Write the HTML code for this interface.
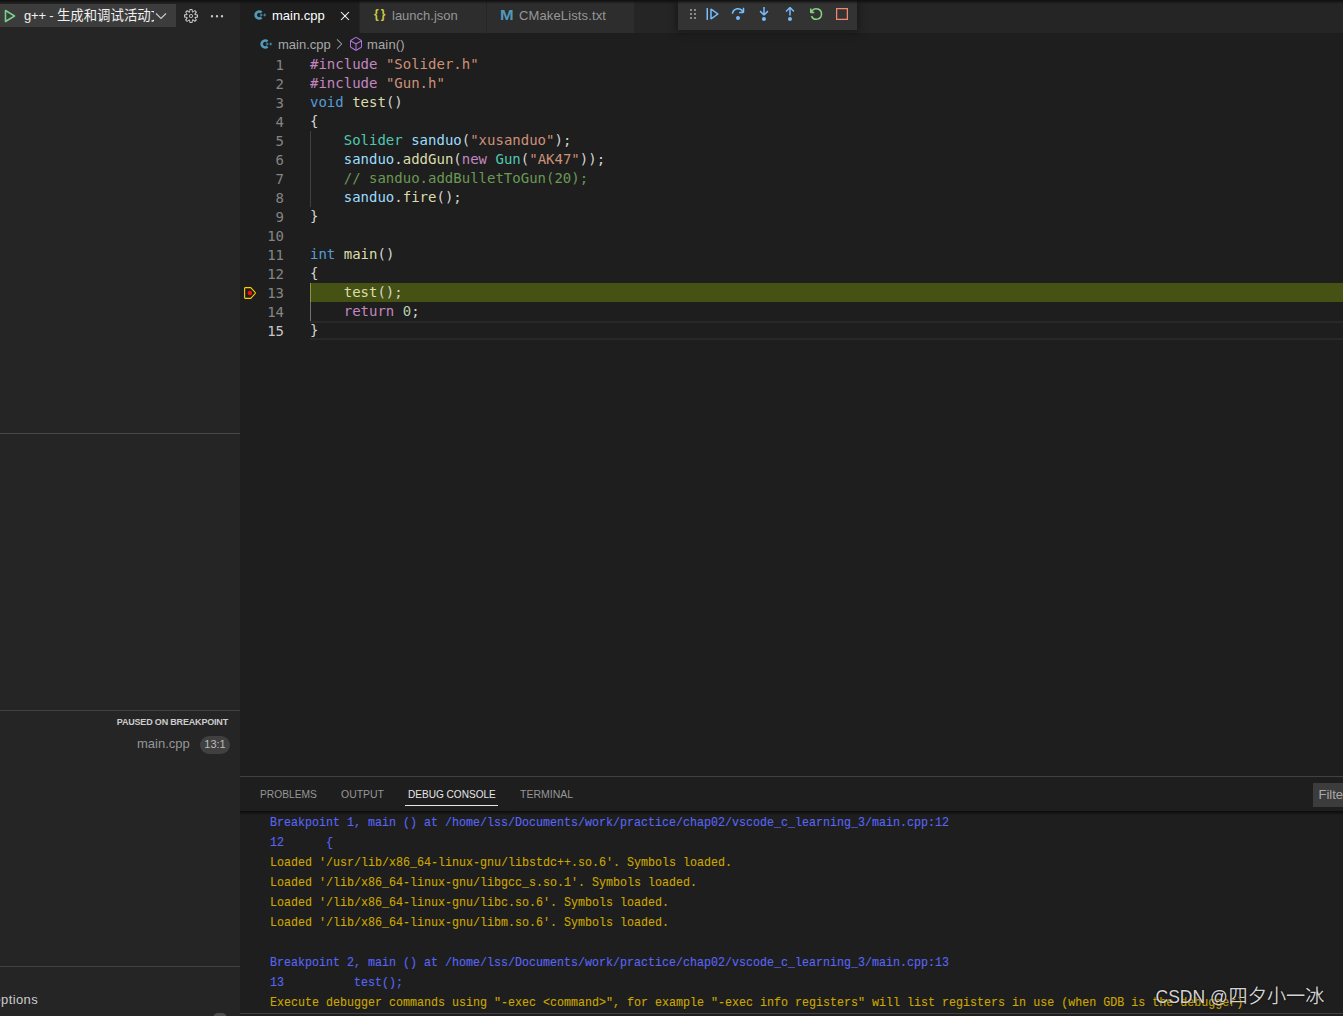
<!DOCTYPE html>
<html lang="zh">
<head>
<meta charset="utf-8">
<title>main.cpp - debug</title>
<style>
*{box-sizing:border-box;margin:0;padding:0}
html,body{width:1343px;height:1016px;overflow:hidden;background:#1e1e1e}
body{position:relative;font-family:"Liberation Sans","Noto Sans CJK SC",sans-serif;font-size:13px;color:#ccc}
.abs{position:absolute}
#side{left:0;top:0;width:240px;height:1016px;background:#252526}
#tabs{left:240px;top:0;width:1103px;height:33px;background:#252526}
.tab{position:absolute;top:0;height:33px;background:#2d2d2d;border-right:1px solid #252526;color:#969696;font-size:13px;line-height:31px;white-space:nowrap}
.tab.act{background:#1e1e1e;color:#fff}
.hl{border-top:1px solid #3c3c3c}
#code{left:240px;top:55px;width:1103px;font-family:"DejaVu Sans Mono","Liberation Mono",monospace;font-size:14px;line-height:19px;color:#d4d4d4;white-space:pre}
.ln{position:absolute;left:0;width:44px;text-align:right;color:#858585;margin-top:1px}
.cl{position:absolute;left:70px}
.k{color:#569cd6}.c{color:#c586c0}.s{color:#ce9178}.f{color:#dcdcaa}.t{color:#4ec9b0}.v{color:#9cdcfe}.g{color:#6a9955}.n{color:#b5cea8}
#panel{left:240px;top:776px;width:1103px;height:240px;border-top:1px solid #414141;background:#1e1e1e}
.pt{position:absolute;top:10px;font-size:11px;line-height:14px;color:#969696;white-space:nowrap;transform:scaleX(.93);transform-origin:0 0}
#con{left:270px;top:813px;width:1400px;font-family:"Liberation Mono",monospace;font-size:13.500px;line-height:20px;transform:scaleX(.8642);transform-origin:0 0;-webkit-text-stroke:.12px currentColor}
#con div{height:20px;white-space:pre;tab-size:8}
.b{color:#5966f6}.y{color:#cca700}
</style>
</head>
<body>
<div id="side" class="abs">
  <div class="abs" style="left:0;top:4px;width:176px;height:23px;background:#3c3c3c"></div>
  <svg class="abs" style="left:4px;top:9px" width="12" height="14" viewBox="0 0 12 14"><path d="M1.5 1.5 L10.5 7 L1.5 12.5 Z" fill="none" stroke="#78d186" stroke-width="1.600" stroke-linejoin="round"/></svg>
  <div class="abs" style="left:24px;top:6px;font-size:13px;line-height:19px;color:#f0f0f0;white-space:nowrap;width:129.500px;overflow:hidden"><span style="letter-spacing:-.17px">g++ - </span><span style="font-size:13.400px">生成和调试活动文件</span></div>
  <svg class="abs" style="left:155px;top:11px" width="12" height="10" viewBox="0 0 12 10"><path d="M1 2.5 L6 7.5 L11 2.5" fill="none" stroke="#ccc" stroke-width="1.1"/></svg>
  <svg class="abs" style="left:183px;top:8px" width="16" height="16" viewBox="0 0 16 16"><path fill="#c5c5c5" fill-rule="evenodd" d="M9.1 4.4L8.6 2H7.400l-.5 2.400-.7.300-2-1.300-.9.800 1.300 2-.2.700-2.400.500v1.200l2.400.500.3.800-1.300 2 .8.800 2-1.300.8.300.4 2.300h1.200l.5-2.400.8-.3 2 1.300.8-.8-1.300-2 .3-.8 2.300-.4V7.400l-2.400-.5-.3-.8 1.300-2-.8-.8-2 1.300-.7-.2zM9.400 1l.5 2.400L12 2.100l2 2-1.400 2.100 2.400.4v2.800l-2.400.5L14 12l-2 2-2.100-1.400-.5 2.400H6.600l-.5-2.400L4 13.900l-2-2 1.400-2.100L1 9.400V6.600l2.400-.5L2.100 4l2-2 2.100 1.400.4-2.400h2.800zm.6 7c0 1.100-.9 2-2 2s-2-.9-2-2 .9-2 2-2 2 .9 2 2zM8 9c.6 0 1-.4 1-1s-.4-1-1-1-1 .4-1 1 .4 1 1 1z"/></svg>
  <svg class="abs" style="left:209px;top:8px" width="16" height="16" viewBox="0 0 16 16"><path fill="#c5c5c5" d="M4.200 8.300a1.200 1.200 0 1 1-2.400 0 1.200 1.200 0 0 1 2.400 0zm5 0a1.200 1.200 0 1 1-2.400 0 1.200 1.200 0 0 1 2.400 0zm5 0a1.200 1.200 0 1 1-2.400 0 1.200 1.200 0 0 1 2.400 0z"/></svg>
  <div class="abs" style="left:0;top:433px;width:240px;height:1px;background:#474747"></div>
  <div class="abs" style="left:0;top:710px;width:240px;height:1px;background:#414141"></div>
  <div class="abs" style="left:0;top:966px;width:240px;height:1px;background:#414141"></div>
  <div class="abs" style="right:12px;top:716px;font-size:9px;font-weight:bold;color:#ccc;line-height:13px;white-space:nowrap;letter-spacing:-.18px">PAUSED ON BREAKPOINT</div>
  <div class="abs" style="left:137px;top:735px;font-size:13px;line-height:18px;color:#969696">main.cpp</div>
  <div class="abs" style="left:200px;top:736px;width:30px;height:18px;border-radius:9px;background:#404040;color:#bcbcbc;font-size:11px;line-height:17px;text-align:center">13:1</div>
  <div class="abs" style="left:-6.500px;top:991px;font-size:13px;line-height:18px;color:#ccc;letter-spacing:.38px;white-space:nowrap">eptions</div>
  <div class="abs" style="left:213px;top:1013px;width:14px;height:10px;border-radius:5px;background:#4d4d4d"></div>
</div>

<div id="tabs" class="abs">
  <div class="tab act" style="left:0;width:120px"><svg class="abs" style="left:14px;top:9px" width="13" height="12" viewBox="0 0 13 12"><path d="M7.5 3.4A3.500 3.500 0 1 0 7.500 8.600" fill="none" stroke="#519aba" stroke-width="2.700"/><path d="M5.800 6h2.800M7.200 4.600v2.800M9.300 6h2.800M10.700 4.600v2.800" stroke="#519aba" stroke-width="1" fill="none" opacity=".85"/></svg><span class="abs" style="left:32px">main.cpp</span>
    <svg class="abs" style="left:97px;top:8px" width="16" height="16" viewBox="0 0 16 16"><path fill="#fff" d="M8 8.707l3.646 3.647.708-.707L8.707 8l3.647-3.646-.707-.708L8 7.293 4.354 3.646l-.707.708L7.293 8l-3.646 3.646.707.708L8 8.707z"/></svg></div>
  <div class="tab" style="left:120px;width:127px"><span class="abs" style="left:14px;top:-1px;color:#cbcb41;font-weight:bold;font-size:12px;letter-spacing:2px">{}</span><span class="abs" style="left:32px">launch.json</span></div>
  <div class="tab" style="left:247px;width:148px"><span class="abs" style="left:13px;top:0;color:#519aba;font-weight:bold;font-size:14px;transform:scaleX(1.17);transform-origin:0 0">M</span><span class="abs" style="left:32px;letter-spacing:.13px">CMakeLists.txt</span></div>
</div>
<div class="abs" style="left:678px;top:0;width:179px;height:30px;background:#333333;box-shadow:0 0 8px 2px rgba(0,0,0,.36)">
  <svg class="abs" style="left:7px;top:6px" width="16" height="16" viewBox="0 0 16 16"><path fill="#8a8a8a" d="M5 3h2v2H5zm0 4h2v2H5zm0 4h2v2H5zm4-8h2v2H9zm0 4h2v2H9zm0 4h2v2H9z"/></svg>
  <svg class="abs" style="left:26px;top:6px" width="16" height="16" viewBox="0 0 16 16"><path fill="#75beff" d="M2.5 2H4v12H2.500V2zm4.936.39L6.250 3v10l1.186.61 7-5V7.390l-7-5zM12.710 8l-4.960 3.543V4.457L12.710 8z"/></svg>
  <svg class="abs" style="left:52px;top:6px" width="16" height="16" viewBox="0 0 16 16"><path fill="#75beff" d="M14.250 5.750v-4h-1.500v2.542c-1.145-1.359-2.911-2.209-4.840-2.209-3.177 0-5.920 2.307-6.160 5.398l-.020.269h1.501l.022-.226c.212-2.195 2.202-3.940 4.656-3.940 1.736 0 3.244.875 4.050 2.166h-2.830v1.500h4.163l.962-.975V5.750h-.004zM8 14a2 2 0 1 0 0-4 2 2 0 0 0 0 4z"/></svg>
  <svg class="abs" style="left:78px;top:6px" width="16" height="16" viewBox="0 0 16 16"><path fill="#75beff" d="M8 9.532h.542l3.905-3.905-1.061-1.060-2.637 2.610V1H7.251v6.177l-2.637-2.610-1.061 1.060 3.905 3.905H8zm1.956 3.481a2 2 0 1 1-4 0 2 2 0 0 1 4 0z"/></svg>
  <svg class="abs" style="left:104px;top:6px" width="16" height="16" viewBox="0 0 16 16"><path fill="#75beff" d="M8 1h-.542L3.553 4.905l1.061 1.060 2.637-2.610v6.177h1.498V3.355l2.637 2.610 1.061-1.060L8.542 1H8zm1.956 12.013a2 2 0 1 1-4 0 2 2 0 0 1 4 0z"/></svg>
  <svg class="abs" style="left:130px;top:6px" width="16" height="16" viewBox="0 0 16 16"><path fill="#89d185" d="M12.750 8a4.500 4.500 0 0 1-8.610 1.834l-1.391.565A6.001 6.001 0 0 0 14.250 8 6 6 0 0 0 3.500 4.334V2.500H2v4l.750.750h3.500v-1.500H4.352A4.500 4.500 0 0 1 12.750 8z"/></svg>
  <svg class="abs" style="left:156px;top:6px" width="16" height="16" viewBox="0 0 16 16"><path fill="#f48771" d="M2 2v12h12V2H2zm10.750 10.750h-9.500v-9.500h9.500v9.500z"/></svg>
</div>
<div class="abs" style="left:0;top:0;width:1343px;height:4px;background:linear-gradient(#0e0e0e,rgba(14,14,14,0))"></div>

<svg class="abs" style="left:260px;top:38px" width="13" height="12" viewBox="0 0 13 12"><path d="M7.5 3.4A3.500 3.500 0 1 0 7.500 8.600" fill="none" stroke="#519aba" stroke-width="2.700"/><path d="M5.800 6h2.800M7.200 4.600v2.800M9.300 6h2.800M10.700 4.600v2.800" stroke="#519aba" stroke-width="1" fill="none" opacity=".85"/></svg>
<div class="abs" style="left:278px;top:36px;font-size:13px;line-height:18px;color:#a9a9a9;white-space:nowrap">main.cpp</div>
<svg class="abs" style="left:331px;top:36px" width="16" height="16" viewBox="0 0 16 16"><path fill="#a9a9a9" d="M10.072 8.024L5.715 3.667l.618-.62L11 7.716v.618L6.333 13l-.618-.619 4.357-4.357z"/></svg>
<svg class="abs" style="left:347.500px;top:36px" width="16" height="16" viewBox="0 0 16 16"><path fill="#b274e0" d="M13.510 4l-5-3h-1l-5 3-.490.860v6l.490.850 5 3h1l5-3 .490-.850v-6L13.510 4zm-6 9.560l-4.500-2.700V5.700l4.500 2.450v5.410zM3.270 4.700l4.740-2.840 4.740 2.840-4.740 2.590L3.270 4.700zm9.740 6.160l-4.500 2.700V8.150l4.500-2.450v5.160z"/></svg>
<div class="abs" style="left:367px;top:36px;font-size:13px;line-height:18px;color:#a9a9a9;white-space:nowrap;letter-spacing:.15px">main()</div>

<div class="abs" style="left:310px;top:283px;width:1033px;height:19px;background:#465213"></div>
<div class="abs" style="left:310px;top:131px;width:1px;height:76px;background:#404040"></div>
<div class="abs" style="left:310px;top:283px;width:1px;height:19px;background:#8c9050"></div><div class="abs" style="left:310px;top:302px;width:1px;height:19px;background:#707070"></div>
<div class="abs" style="left:310px;top:321px;width:1033px;height:19px;border-top:2px solid #282828;border-bottom:2px solid #282828"></div>
<svg class="abs" style="left:242px;top:285px" width="16" height="16" viewBox="0 0 16 16"><path d="M3.2 2.6h5.600L13.600 8l-4.800 5.400H3.200a.6.6 0 0 1-.6-.6V3.200a.6.6 0 0 1 .6-.6z" fill="none" stroke="#ffcc00" stroke-width="1.1" stroke-linejoin="round"/><circle cx="7.900" cy="8" r="2.250" fill="#f01010"/></svg>
<div id="code" class="abs">
<div class="ln" style="top:0">1</div><div class="cl" style="top:0"><span class="c">#include</span> <span class="s">"Solider.h"</span></div>
<div class="ln" style="top:19px">2</div><div class="cl" style="top:19px"><span class="c">#include</span> <span class="s">"Gun.h"</span></div>
<div class="ln" style="top:38px">3</div><div class="cl" style="top:38px"><span class="k">void</span> <span class="f">test</span>()</div>
<div class="ln" style="top:57px">4</div><div class="cl" style="top:57px">{</div>
<div class="ln" style="top:76px">5</div><div class="cl" style="top:76px">    <span class="t">Solider</span> <span class="v">sanduo</span>(<span class="s">"xusanduo"</span>);</div>
<div class="ln" style="top:95px">6</div><div class="cl" style="top:95px">    <span class="v">sanduo</span>.<span class="f">addGun</span>(<span class="c">new</span> <span class="t">Gun</span>(<span class="s">"AK47"</span>));</div>
<div class="ln" style="top:114px">7</div><div class="cl" style="top:114px">    <span class="g">// sanduo.addBulletToGun(20);</span></div>
<div class="ln" style="top:133px">8</div><div class="cl" style="top:133px">    <span class="v">sanduo</span>.<span class="f">fire</span>();</div>
<div class="ln" style="top:152px">9</div><div class="cl" style="top:152px">}</div>
<div class="ln" style="top:171px">10</div>
<div class="ln" style="top:190px">11</div><div class="cl" style="top:190px"><span class="k">int</span> <span class="f">main</span>()</div>
<div class="ln" style="top:209px">12</div><div class="cl" style="top:209px">{</div>
<div class="ln" style="top:228px">13</div><div class="cl" style="top:228px">    <span class="f">test</span>();</div>
<div class="ln" style="top:247px">14</div><div class="cl" style="top:247px">    <span class="c">return</span> <span class="n">0</span>;</div>
<div class="ln" style="top:266px;color:#c6c6c6">15</div><div class="cl" style="top:266px">}</div>
</div>

<div id="panel" class="abs">
  <div class="pt" style="left:20px">PROBLEMS</div>
  <div class="pt" style="left:100.500px;transform:scaleX(.95)">OUTPUT</div>
  <div class="pt" style="left:167.500px;color:#e7e7e7;transform:scaleX(.915)">DEBUG CONSOLE</div>
  <div class="abs" style="left:165px;top:28px;width:93px;height:1px;background:#e7e7e7"></div>
  <div class="pt" style="left:280px;transform:scaleX(.955)">TERMINAL</div>
  <div class="abs" style="left:1073px;top:6px;width:40px;height:24px;background:#3c3c3c;color:#a8a8a8;font-size:13px;line-height:24px;padding-left:5.500px;white-space:nowrap;overflow:hidden">Filter</div>
  <div class="abs" style="left:0;top:34px;width:1103px;height:4px;background:linear-gradient(#0d0d0d 0,#121212 45%,rgba(18,18,18,0) 100%)"></div>
</div>
<div id="con" class="abs">
<div class="b">Breakpoint 1, main () at /home/lss/Documents/work/practice/chap02/vscode_c_learning_3/main.cpp:12</div>
<div class="b">12	{</div>
<div class="y">Loaded '/usr/lib/x86_64-linux-gnu/libstdc++.so.6'. Symbols loaded.</div>
<div class="y">Loaded '/lib/x86_64-linux-gnu/libgcc_s.so.1'. Symbols loaded.</div>
<div class="y">Loaded '/lib/x86_64-linux-gnu/libc.so.6'. Symbols loaded.</div>
<div class="y">Loaded '/lib/x86_64-linux-gnu/libm.so.6'. Symbols loaded.</div>
<div> </div>
<div class="b">Breakpoint 2, main () at /home/lss/Documents/work/practice/chap02/vscode_c_learning_3/main.cpp:13</div>
<div class="b">13	    test();</div>
<div class="y">Execute debugger commands using "-exec &lt;command&gt;", for example "-exec info registers" will list registers in use (when GDB is the debugger)</div>
</div>
<div class="abs" style="left:240px;top:1013px;width:1103px;height:1px;background:#414141"></div>
<div class="abs" style="left:1155.500px;top:985px;font-size:19px;line-height:24px;color:#d4d4d4;white-space:nowrap;text-shadow:0 0 2px rgba(0,0,0,.9)"><span style="font-size:17.500px">CSDN @</span><span style="font-weight:350;font-size:19.200px;margin-left:.8px">四夕小一冰</span></div>
</body>
</html>
